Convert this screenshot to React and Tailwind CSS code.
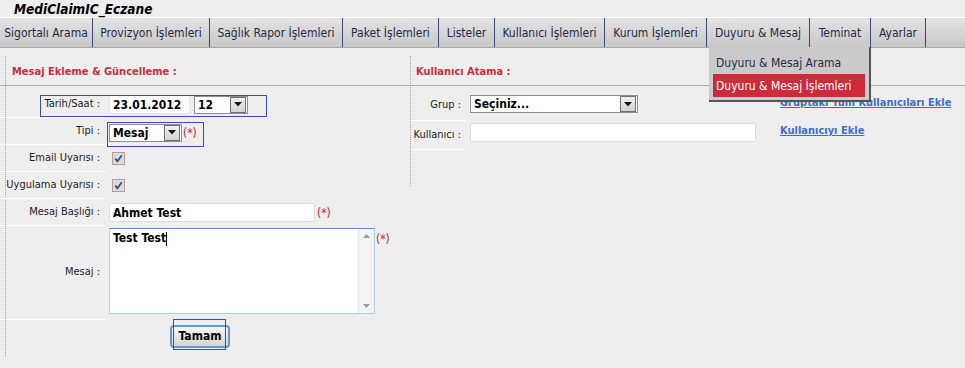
import React from 'react'

const tabs = [
  { label: 'Sigortalı Arama', w: 'w-[93px]' },
  { label: 'Provizyon İşlemleri', w: 'w-[117px]' },
  { label: 'Sağlık Rapor İşlemleri', w: 'w-[133px]' },
  { label: 'Paket İşlemleri', w: 'w-[96px]' },
  { label: 'Listeler', w: 'w-[56px]' },
  { label: 'Kullanıcı İşlemleri', w: 'w-[110px]' },
  { label: 'Kurum İşlemleri', w: 'w-[102px]' },
  { label: 'Duyuru & Mesaj', w: 'w-[103px]' },
  { label: 'Teminat', w: 'w-[61px]' },
  { label: 'Ayarlar', w: 'w-[55px]' },
]

function Arrow({ className = '' }) {
  return (
    <div className={`flex items-center justify-center w-[16px] h-[16px] border border-[#6f6f6f] bg-gradient-to-b from-[#f2f2f2] to-[#d2d2d2] ${className}`}>
      <svg width="8" height="5" viewBox="0 0 8 5"><polygon points="0,0 8,0 4,4.5" fill="#111" /></svg>
    </div>
  )
}

function Select({ value, w }) {
  return (
    <div className={`flex items-center justify-between h-[18px] ${w} bg-white border border-[#8e8e8e] pl-[3px] pr-[1px]`}>
      <span className="font-bold text-[12px] text-black">{value}</span>
      <Arrow />
    </div>
  )
}

function Check() {
  return (
    <div className="w-[13px] h-[13px] border border-[#c29797] bg-[#dcdcdc] flex items-center justify-center">
      <svg width="9" height="9" viewBox="0 0 9 9">
        <path d="M1.2 4.6 L3.4 7.2 L7.8 1.2" stroke="#2f4b9b" strokeWidth="1.8" fill="none" />
      </svg>
    </div>
  )
}

function Req() {
  return <span className="text-[#d2202a] text-[12px]">(*)</span>
}

function Row({ label, h = 'h-[27px]', children, labelW = 'w-[105px]' }) {
  return (
    <div className="flex">
      <div className={`${labelW} ${h} shrink-0 border-b border-white flex items-center justify-end pr-[5px] text-[11px] text-[#222]`}>
        {label}
      </div>
      <div className={`${h} flex items-center pl-[4px] gap-[2px]`}>{children}</div>
    </div>
  )
}

export default function App() {
  return (
    <div className="w-[965px] h-[368px] bg-[#eeeeee] relative overflow-hidden font-['DejaVu_Sans_Condensed','DejaVu_Sans',sans-serif]">
      {/* Title */}
      <div className="h-[17px] pl-[14px] pt-[1px] text-[13.5px] leading-[16px] font-bold italic text-black">
        MediClaimIC_Eczane
      </div>

      {/* Menu bar */}
      <div className="flex h-[31px] border-t border-white border-b border-b-[#a8a8a8] bg-gradient-to-b from-[#e3e3e3] to-[#c8c8c8]">
        {tabs.map(t => (
          <div key={t.label} className={`${t.w} h-full flex items-center justify-center border-r border-[#3a4878] text-[12px] text-[#1c2a48] whitespace-nowrap`}>
            {t.label}
          </div>
        ))}
      </div>

      {/* Content */}
      <div className="flex">
        {/* Left: message form */}
        <div className="w-[405px] ml-[5px] mt-[8px] h-[301px] border-l border-dotted border-[#a3a3a3]">
          <div className="-ml-[6px] h-[30px] border-b border-[#ababab] pl-[12px] pt-[3px] flex items-center text-[11px] font-bold text-[#cc2d3b]">
            Mesaj Ekleme &amp; Güncelleme :
          </div>
          <div className="-ml-[6px] pt-[5px]">
            <Row label="Tarih/Saat :">
              <div className="w-[81px] h-[19px] bg-white border border-[#e4e4e4] rounded-[2px] flex items-center pl-[3px] font-bold text-[12px] text-black">23.01.2012</div>
              <div className="ml-[2px]"><Select value="12" w="w-[54px]" /></div>
            </Row>
            <Row label="Tipi :">
              <div className="mt-[2px] flex items-center gap-[1px]">
                <Select value="Mesaj" w="w-[73px]" />
                <Req />
              </div>
            </Row>
            <Row label="Email Uyarısı :">
              <div className="pl-[3px]"><Check /></div>
            </Row>
            <Row label="Uygulama Uyarısı :">
              <div className="pl-[3px]"><Check /></div>
            </Row>
            <Row label="Mesaj Başlığı :">
              <div className="w-[206px] h-[19px] bg-white border border-[#dcdcdc] rounded-[2px] flex items-center pl-[3px] font-bold text-[12px] text-black">Ahmet Test</div>
              <Req />
            </Row>
            <Row label="Mesaj :" h="h-[94px]">
              <div className="flex items-start self-start mt-[2px]">
                <div className="w-[266px] h-[86px] bg-white border border-[#a6d4e6] border-t-[#5a8fcf] flex">
                  <div className="flex-1 pl-[3px] pt-[1px] font-bold text-[12px] text-black leading-[16px]">
                    Test Test<span className="inline-block w-[1px] h-[14px] bg-black align-middle" />
                  </div>
                  <div className="w-[16px] h-full bg-[#f3f3f3] border-l border-[#e6e6e6] flex flex-col items-center justify-between py-[5px]">
                    <svg width="7" height="4" viewBox="0 0 7 4"><polygon points="0,4 7,4 3.5,0" fill="#9a9a9a" /></svg>
                    <svg width="7" height="4" viewBox="0 0 7 4"><polygon points="0,0 7,0 3.5,4" fill="#9a9a9a" /></svg>
                  </div>
                </div>
                <div className="ml-[1px] -mt-[2px]"><Req /></div>
              </div>
            </Row>
            <div className="pl-[170px] pt-[3px]">
              <button className="w-[60px] h-[23px] rounded-[4px] border-2 border-[#5d9bd8] bg-gradient-to-b from-[#f6f6f6] to-[#d6d6d6] font-bold text-[12px] text-black">
                Tamam
              </button>
            </div>
          </div>
        </div>

        {/* Right: user assignment */}
        <div className="flex-1 mt-[8px] h-[130px] border-l border-dotted border-[#a3a3a3]">
          <div className="-ml-[1px] h-[30px] border-b border-[#ababab] pl-[6px] pt-[3px] flex items-center text-[11px] font-bold text-[#cc2d3b]">
            Kullanıcı Atama :
          </div>
          <div className="pt-[5px]">
            <div className="flex">
              <div className="w-[55px] h-[30px] shrink-0 border-b border-white flex items-center justify-end pr-[5px] text-[11px] text-[#222]">Grup :</div>
              <div className="h-[30px] flex items-center pl-[4px] w-[314px]">
                <div className="-mt-[4px]"><Select value="Seçiniz..." w="w-[168px]" /></div>
              </div>
              <div className="h-[30px] flex items-center -mt-[3px] text-[11px] font-bold text-[#3c6dd6] underline">Gruptaki Tüm Kullanıcıları Ekle</div>
            </div>
            <div className="flex">
              <div className="w-[55px] h-[29px] shrink-0 border-b border-white flex items-center justify-end pr-[5px] text-[11px] text-[#222]">Kullanıcı :</div>
              <div className="h-[29px] flex items-center pl-[4px] w-[314px]">
                <div className="-mt-[6px] w-[286px] h-[19px] bg-white border border-[#dcdcdc] rounded-[2px]" />
              </div>
              <div className="h-[29px] flex items-center -mt-[4px] text-[11px] font-bold text-[#3c6dd6] underline">Kullanıcıyı Ekle</div>
            </div>
          </div>
        </div>
      </div>

      {/* Dropdown of "Duyuru & Mesaj" */}
      <div className="absolute left-[709px] top-[47px] w-[162px] bg-[#cacaca] border-r-2 border-b-2 border-[#555555] pt-[4px] pb-[3px] px-[4px] text-[12px]">
        <div className="h-[23px] flex items-center pl-[3px] text-[#1c2a48] whitespace-nowrap">Duyuru &amp; Mesaj Arama</div>
        <div className="h-[23px] flex items-center pl-[3px] bg-[#cd2a3b] text-white whitespace-nowrap">Duyuru &amp; Mesaj İşlemleri</div>
      </div>

      {/* Highlight rectangles */}
      <div className="absolute left-[40px] top-[95px] w-[227px] h-[22px] border border-[#3b46cf] pointer-events-none" />
      <div className="absolute left-[107px] top-[122px] w-[97px] h-[25px] border border-[#3b46cf] pointer-events-none" />
      <div className="absolute left-[173px] top-[319px] w-[53px] h-[31px] border border-[#3b46cf] pointer-events-none" />
    </div>
  )
}
